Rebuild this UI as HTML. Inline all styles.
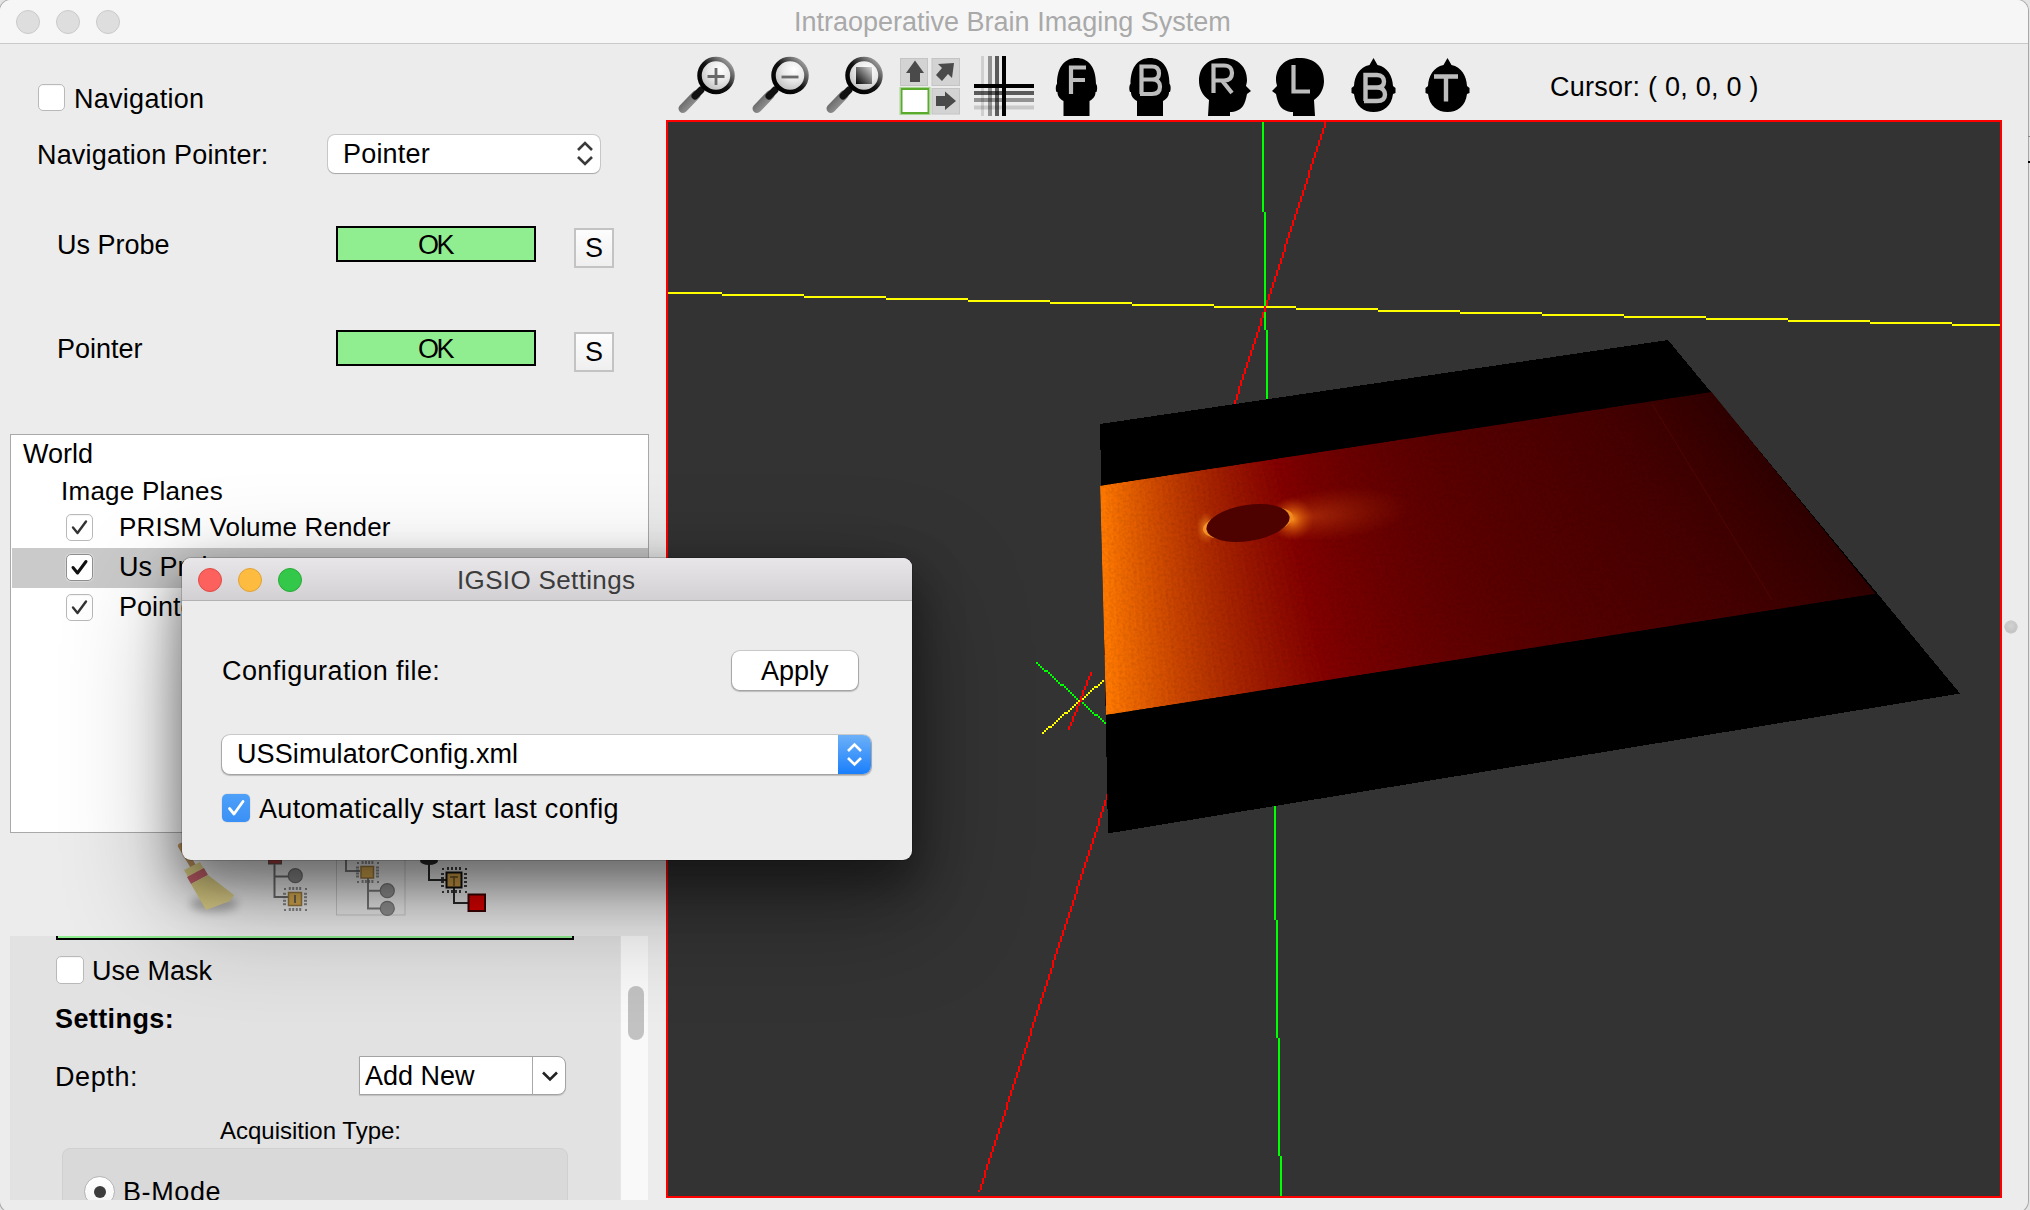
<!DOCTYPE html>
<html><head><meta charset="utf-8">
<style>
*{box-sizing:border-box;margin:0;padding:0}
html,body{width:2030px;height:1210px;overflow:hidden;background:#e4e4e4}
body{font-family:"Liberation Sans",sans-serif;font-size:27px;line-height:27px;color:#000;position:relative}
.a{position:absolute}
.t{position:absolute;white-space:nowrap;font-size:27px;line-height:27px}
#win{position:absolute;left:0;top:0;width:2028px;height:1212px;background:#ececec;border-radius:11px;overflow:hidden;box-shadow:0 0 0 1px #a8a8a8}
#titlebar{position:absolute;left:0;top:0;width:2028px;height:44px;background:#f6f6f6;border-bottom:1px solid #c9c9c9}
.tl{position:absolute;top:10px;width:24px;height:24px;border-radius:50%;background:#dedede;border:1px solid #cacaca}
.cb{position:absolute;width:27px;height:27px;border-radius:5px;background:#fff;border:1px solid #b9b9b9;box-shadow:inset 0 1px 1px rgba(0,0,0,0.04)}
.okb{position:absolute;width:200px;height:36px;background:#90ee90;border:2px solid #000}
.sb{position:absolute;width:40px;height:40px;border:2px solid #c3c3c3;background:linear-gradient(#fdfdfd,#efefef)}
</style></head>
<body>
<div id="win">
  <div id="titlebar">
    <div class="tl" style="left:16px"></div>
    <div class="tl" style="left:56px"></div>
    <div class="tl" style="left:96px"></div>
    <div class="t" style="left:794px;top:9px;color:#a9a9a9">Intraoperative Brain Imaging System</div>
  </div>

  <svg class="a" style="left:0;top:0" width="1500" height="120" viewBox="0 0 1500 120">
    <defs>
      <linearGradient id="hdl" x1="0" y1="0" x2="1" y2="1"><stop offset="0" stop-color="#5a5a5a"/><stop offset="1" stop-color="#a0a0a0"/></linearGradient>
      <radialGradient id="lens" cx="0.62" cy="0.32" r="0.7"><stop offset="0" stop-color="#ffffff"/><stop offset="0.5" stop-color="#e8e8e8"/><stop offset="1" stop-color="#bcbcbc"/></radialGradient>
      <linearGradient id="ring" x1="0.1" y1="0.9" x2="0.9" y2="0.1"><stop offset="0" stop-color="#000"/><stop offset="0.5" stop-color="#111"/><stop offset="1" stop-color="#9a9a9a"/></linearGradient>
      <linearGradient id="sq" x1="0" y1="1" x2="1" y2="0"><stop offset="0" stop-color="#000"/><stop offset="1" stop-color="#d8d8d8"/></linearGradient>
    </defs>
    <g>
      <line x1="696" y1="95" x2="683" y2="108.5" stroke="url(#hdl)" stroke-width="9" stroke-linecap="round"/>
      <line x1="701" y1="90" x2="695" y2="96" stroke="#111" stroke-width="7" stroke-linecap="round"/>
      <circle cx="716" cy="75.5" r="16.5" fill="url(#lens)" stroke="url(#ring)" stroke-width="4.5"/>
      <path d="M707.5 76.5 H724.5 M716 68 V85" stroke="#6a6a6a" stroke-width="2.8"/>
    </g>
    <g>
      <line x1="770" y1="95" x2="757" y2="108.5" stroke="url(#hdl)" stroke-width="9" stroke-linecap="round"/>
      <line x1="775" y1="90" x2="769" y2="96" stroke="#111" stroke-width="7" stroke-linecap="round"/>
      <circle cx="790" cy="75.5" r="16.5" fill="url(#lens)" stroke="url(#ring)" stroke-width="4.5"/>
      <path d="M781.5 77 H798.5" stroke="#6a6a6a" stroke-width="2.8"/>
    </g>
    <g>
      <line x1="844" y1="95" x2="831" y2="108.5" stroke="url(#hdl)" stroke-width="9" stroke-linecap="round"/>
      <line x1="849" y1="90" x2="843" y2="96" stroke="#111" stroke-width="7" stroke-linecap="round"/>
      <circle cx="864" cy="75.5" r="16.5" fill="url(#lens)" stroke="url(#ring)" stroke-width="4.5"/>
      <rect x="856" y="67" width="16" height="17" fill="url(#sq)"/>
    </g>
    <g>
      <rect x="900.5" y="58.5" width="27" height="27" fill="#d3d3d3" stroke="#c4c4c4"/>
      <rect x="932" y="58.5" width="27.5" height="27" fill="#d3d3d3" stroke="#c4c4c4"/>
      <rect x="932" y="88.5" width="27.5" height="25.5" fill="#d3d3d3" stroke="#c4c4c4"/>
      <rect x="901.5" y="89" width="27" height="24" fill="#fff" stroke="#5aaa2e" stroke-width="2"/>
      <rect x="900" y="87.5" width="30" height="27" fill="none" stroke="#a8d494" stroke-width="1"/>
      <path d="M915 60.5 L924 73 L920 73 L920 82 L910 82 L910 73 L906 73 Z" fill="#4a4a4a"/>
      <path d="M954 63 L952 78 L948 74 L942 81 L936 75 L942 68 L938 64 Z" fill="#4a4a4a"/>
      <path d="M956 101 L945 91.5 L945 96 L936 96 L936 106 L945 106 L945 110 Z" fill="#4a4a4a"/>
    </g>
    <g>
      <rect x="981" y="56" width="3" height="60" fill="#000" opacity="0.12"/>
      <rect x="988" y="56" width="4" height="60" fill="#000" opacity="0.38"/>
      <rect x="995" y="56" width="4" height="60" fill="#000" opacity="0.62"/>
      <rect x="974" y="91" width="60" height="4" fill="#000" opacity="0.62"/>
      <rect x="974" y="98" width="60" height="4" fill="#000" opacity="0.38"/>
      <rect x="974" y="105.5" width="60" height="4" fill="#000" opacity="0.15"/>
      <rect x="1002" y="56" width="4" height="60" fill="#000"/>
      <rect x="974" y="84" width="60" height="4" fill="#000"/>
    </g>
    <g>
      <path d="M1063.5 116 L1063.5 101 C1058.5 98 1057.5 95 1057.5 92 L1056.5 92 C1055.5 90 1055.5 85 1057.0 84 C1057.0 66 1065.5 58 1076.5 58 C1087.5 58 1096.0 66 1096.0 84 C1097.5 85 1097.5 90 1096.5 92 L1095.5 92 C1095.5 95 1094.5 98 1089.5 101 L1089.5 116 Z" fill="#000"/>
      <path d="M1071 94 V67.5 H1086 M1071 80 H1085" fill="none" stroke="#bdbdbd" stroke-width="4.2"/>
    </g>
    <g>
      <path d="M1137 116 L1137 101 C1132 98 1131 95 1131 92 L1130 92 C1129 90 1129 85 1130.5 84 C1130.5 66 1139 58 1150 58 C1161 58 1169.5 66 1169.5 84 C1171 85 1171 90 1170 92 L1169 92 C1169 95 1168 98 1163 101 L1163 116 Z" fill="#000"/>
      <path d="M1141.5 94 V66.5 H1152 C1158 66.5 1159 70 1159 73.5 C1159 77 1157 79.5 1152 79.5 H1141.5 M1152 79.5 C1158 79.5 1160 83 1160 86.5 C1160 90.5 1158 94 1152 94 H1140" fill="none" stroke="#bdbdbd" stroke-width="4.2"/>
    </g>
    <g>
      <path d="M1208 116 L1209 100 C1202 95 1199 88 1199 81 C1199 66 1209 58 1224 58 C1238 58 1247 67 1247 80 C1247 83 1246 85 1246 86 L1251 91 L1247 94 C1246 99 1245 103 1243 106 C1240 110 1235 112 1230 112 L1230 116 Z" fill="#000"/>
      <path d="M1213.5 93 V65.5 H1224 C1230 65.5 1232 69.5 1232 73 C1232 77 1230 80.5 1224 80.5 H1213.5 M1222 80.5 L1232 93" fill="none" stroke="#bdbdbd" stroke-width="4.2"/>
    </g>
    <g>
      <path d="M1315 116 L1314 100 C1321 95 1324 88 1324 81 C1324 66 1314 58 1299 58 C1285 58 1276 67 1276 80 C1276 83 1277 85 1277 86 L1272 91 L1276 94 C1277 99 1278 103 1280 106 C1283 110 1288 112 1293 112 L1293 116 Z" fill="#000"/>
      <path d="M1293.5 65 V91.5 H1310" fill="none" stroke="#bdbdbd" stroke-width="4.2"/>
    </g>
    <g>
      <path d="M1373.5 58 L1377.5 65 C1387.5 67 1392.5 76 1393.0 86 L1395.5 88 L1395.5 93 L1393.0 94 C1391.5 106 1383.5 112 1373.5 112 C1363.5 112 1355.5 106 1354.0 94 L1351.5 93 L1351.5 88 L1354.0 86 C1354.5 76 1359.5 67 1369.5 65 Z" fill="#000"/>
      <path d="M1365.5 101 V75 H1377 C1382 75 1384 78 1384 81.5 C1384 85 1382 87.5 1377 87.5 H1365.5 M1377 87.5 C1383 87.5 1385 91 1385 94.5 C1385 98.5 1383 101 1377 101 H1364" fill="none" stroke="#bdbdbd" stroke-width="4.4"/>
    </g>
    <g>
      <path d="M1447.5 58 L1451.5 65 C1461.5 67 1466.5 76 1467.0 86 L1469.5 88 L1469.5 93 L1467.0 94 C1465.5 106 1457.5 112 1447.5 112 C1437.5 112 1429.5 106 1428.0 94 L1425.5 93 L1425.5 88 L1428.0 86 C1428.5 76 1433.5 67 1443.5 65 Z" fill="#000"/>
      <path d="M1434 76.5 H1458 M1446 76.5 V101.5" fill="none" stroke="#bdbdbd" stroke-width="4.4"/>
    </g>
  </svg>
  <div class="t" style="left:1550px;top:74px;letter-spacing:0.25px">Cursor: ( 0, 0, 0 )</div>
  <!-- left panel -->
  <div class="cb" style="left:38px;top:84px"></div>
  <div class="t" style="left:74px;top:86px;letter-spacing:0.27px">Navigation</div>
  <div class="t" style="left:37px;top:142px;letter-spacing:0.18px">Navigation Pointer:</div>
  <div class="a" style="left:328px;top:135px;width:272px;height:38px;background:#fff;border-radius:7px;box-shadow:0 0 0 1px rgba(0,0,0,0.14),0 1px 1px rgba(0,0,0,0.18)"></div>
  <div class="t" style="left:343px;top:141px;letter-spacing:0.2px">Pointer</div>
  <svg class="a" style="left:574px;top:140px" width="22" height="28" viewBox="0 0 22 28"><path d="M4 10 L11 3 L18 10 M4 17 L11 24 L18 17" fill="none" stroke="#3a3a3a" stroke-width="2.6"/></svg>

  <div class="t" style="left:57px;top:232px">Us Probe</div>
  <div class="okb" style="left:336px;top:226px"></div>
  <div class="t" style="left:418px;top:232px;letter-spacing:-2.5px">OK</div>
  <div class="sb" style="left:574px;top:228px"></div>
  <div class="t" style="left:585px;top:235px">S</div>

  <div class="t" style="left:57px;top:336px">Pointer</div>
  <div class="okb" style="left:336px;top:330px"></div>
  <div class="t" style="left:418px;top:336px;letter-spacing:-2.5px">OK</div>
  <div class="sb" style="left:574px;top:332px"></div>
  <div class="t" style="left:585px;top:339px">S</div>

  <!-- tree -->
  <div id="tree" class="a" style="left:10px;top:434px;width:639px;height:399px;background:#fff;border:1px solid #a9a9a9;overflow:hidden">
    <div class="a" style="left:1px;top:113px;width:636px;height:40px;background:#cacaca"></div>
    <div class="t" style="left:12px;top:6px">World</div>
    <div class="t" style="left:50px;top:43px;font-size:26px;letter-spacing:0.25px">Image Planes</div>
    <div class="cb" style="left:55px;top:79px"><svg width="25" height="25" viewBox="0 0 25 25"><path d="M6 12.5 L10.5 18 L19 6.5" fill="none" stroke="#333" stroke-width="2.4" stroke-linecap="round" stroke-linejoin="round"/></svg></div>
    <div class="t" style="left:108px;top:79px;font-size:26px;letter-spacing:0.15px">PRISM Volume Render</div>
    <div class="cb" style="left:55px;top:119px;border:1px solid #8f8f8f;box-shadow:0 0 0 1px #d8d8d8"><svg width="25" height="25" viewBox="0 0 25 25"><path d="M6 12.5 L10.5 18 L19 6.5" fill="none" stroke="#111" stroke-width="3" stroke-linecap="round" stroke-linejoin="round"/></svg></div>
    <div class="t" style="left:108px;top:119px">Us Probe</div>
    <div class="cb" style="left:55px;top:159px"><svg width="25" height="25" viewBox="0 0 25 25"><path d="M6 12.5 L10.5 18 L19 6.5" fill="none" stroke="#333" stroke-width="2.4" stroke-linecap="round" stroke-linejoin="round"/></svg></div>
    <div class="t" style="left:108px;top:159px">Pointer</div>
  </div>

  <!-- bottom icons -->
  <svg class="a" style="left:0;top:830px" width="660" height="110" viewBox="0 830 660 110">
    <defs>
      <filter id="bl" x="-50%" y="-50%" width="200%" height="200%"><feGaussianBlur stdDeviation="4"/></filter>
      <linearGradient id="brist" x1="0" y1="0" x2="1" y2="1"><stop offset="0" stop-color="#d4c67a"/><stop offset="1" stop-color="#e2d490"/></linearGradient>
    </defs>
    <ellipse cx="214" cy="904" rx="24" ry="8" fill="#000" opacity="0.25" filter="url(#bl)"/>
    <path d="M181 846 L193 866" stroke="#b8905c" stroke-width="6" stroke-linecap="round"/>
    <path d="M184 870 L200 862 L204 869 L188 877 Z" fill="#dccf86"/>
    <path d="M187 877 L204 868 L208 875 L191 884 Z" fill="#c4606a"/>
    <path d="M191 884 L208 875 L234 895 L230 901 L206 910 Z" fill="url(#brist)"/>
    <g>
      <rect x="268.5" y="859" width="13" height="5" fill="#a84040" stroke="#555" stroke-width="1"/>
      <path d="M274.5 864 V897 H288 M274.5 876.5 H288" fill="none" stroke="#6e6e6e" stroke-width="2"/>
      <circle cx="295.3" cy="875.7" r="7" fill="#8c8c8c" stroke="#707070" stroke-width="1.2"/>
      <rect x="288.5" y="892.5" width="13" height="13" fill="#d8ac50" stroke="#9a7a40" stroke-width="1.5"/>
      <path d="M295 895 V903" stroke="#555" stroke-width="1.6"/>
      <g opacity="0.75"><rect x="288.8" y="887.0" width="2" height="3" fill="#666"/><rect x="288.8" y="908.0" width="2" height="3" fill="#666"/><rect x="283.0" y="892.8" width="3" height="2" fill="#666"/><rect x="304.0" y="892.8" width="3" height="2" fill="#666"/><rect x="292.2" y="887.0" width="2" height="3" fill="#666"/><rect x="292.2" y="908.0" width="2" height="3" fill="#666"/><rect x="283.0" y="896.2" width="3" height="2" fill="#666"/><rect x="304.0" y="896.2" width="3" height="2" fill="#666"/><rect x="295.8" y="887.0" width="2" height="3" fill="#666"/><rect x="295.8" y="908.0" width="2" height="3" fill="#666"/><rect x="283.0" y="899.8" width="3" height="2" fill="#666"/><rect x="304.0" y="899.8" width="3" height="2" fill="#666"/><rect x="299.2" y="887.0" width="2" height="3" fill="#666"/><rect x="299.2" y="908.0" width="2" height="3" fill="#666"/><rect x="283.0" y="903.2" width="3" height="2" fill="#666"/><rect x="304.0" y="903.2" width="3" height="2" fill="#666"/><rect x="284.0" y="888.0" width="2" height="2" fill="#666"/><rect x="305.0" y="888.0" width="2" height="2" fill="#666"/><rect x="284.0" y="909.0" width="2" height="2" fill="#666"/><rect x="305.0" y="909.0" width="2" height="2" fill="#666"/></g>
    </g>
    <rect x="336.5" y="856.5" width="68.5" height="58.5" fill="none" stroke="#b8b8b8" stroke-width="1" opacity="0.7"/>
    <g>
      <path d="M346 858 V871 H360 M368 878 V908.5 H380 M368 890.7 H380" fill="none" stroke="#7a7a7a" stroke-width="2"/>
      <rect x="361" y="866.5" width="12.5" height="11.5" fill="#d8ac50" stroke="#9a7a40" stroke-width="1.5"/>
      <g opacity="0.7"><rect x="361.6" y="861.0" width="2" height="3" fill="#666"/><rect x="361.6" y="880.0" width="2" height="3" fill="#666"/><rect x="356.0" y="866.5" width="3" height="2" fill="#666"/><rect x="376.0" y="866.5" width="3" height="2" fill="#666"/><rect x="364.9" y="861.0" width="2" height="3" fill="#666"/><rect x="364.9" y="880.0" width="2" height="3" fill="#666"/><rect x="356.0" y="869.5" width="3" height="2" fill="#666"/><rect x="376.0" y="869.5" width="3" height="2" fill="#666"/><rect x="368.1" y="861.0" width="2" height="3" fill="#666"/><rect x="368.1" y="880.0" width="2" height="3" fill="#666"/><rect x="356.0" y="872.5" width="3" height="2" fill="#666"/><rect x="376.0" y="872.5" width="3" height="2" fill="#666"/><rect x="371.4" y="861.0" width="2" height="3" fill="#666"/><rect x="371.4" y="880.0" width="2" height="3" fill="#666"/><rect x="356.0" y="875.5" width="3" height="2" fill="#666"/><rect x="376.0" y="875.5" width="3" height="2" fill="#666"/><rect x="357.0" y="862.0" width="2" height="2" fill="#666"/><rect x="377.0" y="862.0" width="2" height="2" fill="#666"/><rect x="357.0" y="881.0" width="2" height="2" fill="#666"/><rect x="377.0" y="881.0" width="2" height="2" fill="#666"/></g>
      <circle cx="387.3" cy="890.7" r="7" fill="#929292" stroke="#747474" stroke-width="1.2"/>
      <circle cx="387.3" cy="908.4" r="7" fill="#929292" stroke="#747474" stroke-width="1.2"/>
    </g>
    <g>
      <ellipse cx="429" cy="861" rx="9" ry="4" fill="#2a2a2a"/>
      <path d="M429 864 V880 H446 M454 888 V903 H468" fill="none" stroke="#2a2a2a" stroke-width="2"/>
      <rect x="446.5" y="872.5" width="15" height="15" fill="#d0a048" stroke="#111" stroke-width="2"/>
      <path d="M454 876 V886 M450 877 H458" stroke="#6a5020" stroke-width="1.4"/>
      <g opacity="0.85"><rect x="447.0" y="867.0" width="2" height="3" fill="#222"/><rect x="447.0" y="890.0" width="2" height="3" fill="#222"/><rect x="441.0" y="873.0" width="3" height="2" fill="#222"/><rect x="464.0" y="873.0" width="3" height="2" fill="#222"/><rect x="451.0" y="867.0" width="2" height="3" fill="#222"/><rect x="451.0" y="890.0" width="2" height="3" fill="#222"/><rect x="441.0" y="877.0" width="3" height="2" fill="#222"/><rect x="464.0" y="877.0" width="3" height="2" fill="#222"/><rect x="455.0" y="867.0" width="2" height="3" fill="#222"/><rect x="455.0" y="890.0" width="2" height="3" fill="#222"/><rect x="441.0" y="881.0" width="3" height="2" fill="#222"/><rect x="464.0" y="881.0" width="3" height="2" fill="#222"/><rect x="459.0" y="867.0" width="2" height="3" fill="#222"/><rect x="459.0" y="890.0" width="2" height="3" fill="#222"/><rect x="441.0" y="885.0" width="3" height="2" fill="#222"/><rect x="464.0" y="885.0" width="3" height="2" fill="#222"/><rect x="442.0" y="868.0" width="2" height="2" fill="#222"/><rect x="465.0" y="868.0" width="2" height="2" fill="#222"/><rect x="442.0" y="891.0" width="2" height="2" fill="#222"/><rect x="465.0" y="891.0" width="2" height="2" fill="#222"/></g>
      <rect x="468.5" y="894.5" width="16.5" height="16.5" fill="#dd0000" stroke="#3a0000" stroke-width="2"/>
    </g>
  </svg>

  <!-- scroll area -->
  <div id="scroll" class="a" style="left:10px;top:936px;width:638px;height:264px;background:#e2e2e2;overflow:hidden">
    <div class="a" style="left:46px;top:-34px;width:518px;height:38px;background:#90ee90;border:2px solid #000"></div>
    <div class="cb" style="left:46px;top:20px;width:28px;height:28px"></div>
    <div class="t" style="left:82px;top:22px">Use Mask</div>
    <div class="t" style="left:45px;top:70px;font-weight:bold;letter-spacing:0.4px">Settings:</div>
    <div class="t" style="left:45px;top:128px;letter-spacing:0.6px">Depth:</div>
    <div class="a" style="left:349px;top:120px;width:207px;height:39px;background:#fff;border:1px solid #a3a3a3;border-radius:0 8px 8px 0;box-shadow:0 1px 1px rgba(0,0,0,0.15)">
      <div class="a" style="left:172px;top:-1px;width:1px;height:39px;background:#a8a8a8"></div>
      <svg class="a" style="left:181px;top:13px" width="18" height="12" viewBox="0 0 18 12"><path d="M2 2.5 L9 9.5 L16 2.5" fill="none" stroke="#222" stroke-width="2.6"/></svg>
    </div>
    <div class="t" style="left:355px;top:127px">Add New</div>
    <div class="t" style="left:210px;top:183px;font-size:24px;line-height:24px">Acquisition Type:</div>
    <div class="a" style="left:52px;top:212px;width:506px;height:80px;background:#d9d9d9;border:1px solid #d0d0d0;border-radius:8px"></div>
    <div class="a" style="left:74px;top:240px;width:31px;height:31px;border-radius:50%;background:linear-gradient(#fff,#f4f4f4);border:1px solid #b5b5b5"></div>
    <div class="a" style="left:84px;top:250px;width:12px;height:12px;border-radius:50%;background:#3c3c3c"></div>
    <div class="t" style="left:113px;top:243px;letter-spacing:0.6px">B-Mode</div>
    <div class="a" style="left:610px;top:0;width:28px;height:264px;background:#f9f9f9;border-left:1px solid #e6e6e6"></div>
    <div class="a" style="left:618px;top:50px;width:16px;height:54px;background:#c2c2c2;border-radius:8px"></div>
  </div>
  <!-- 3D view -->
  <div id="view" class="a" style="left:666px;top:120px;width:1336px;height:1078px;background:#333;border:2px solid #f00;overflow:hidden">
    <svg class="a" style="left:0;top:0" width="1332" height="1074" viewBox="668 122 1332 1074">
      <defs>
        <filter id="noise" x="0" y="0" width="100%" height="100%"><feTurbulence type="fractalNoise" baseFrequency="0.35" numOctaves="2" seed="3"/><feColorMatrix type="matrix" values="0 0 0 0 0  0 0 0 0 0  0 0 0 0 0  0 0 0 -1.6 1.0"/></filter>
        <clipPath id="bandclip"><polygon points="1100,485.8 1711.7,391.9 1875.7,593.7 1106,715"/></clipPath>
        <linearGradient id="bandshade" gradientUnits="userSpaceOnUse" x1="0" y1="440" x2="0" y2="660">
          <stop offset="0" stop-color="#000" stop-opacity="0.08"/>
          <stop offset="1" stop-color="#000" stop-opacity="0"/>
        </linearGradient>
        <linearGradient id="band" gradientUnits="userSpaceOnUse" x1="1100" y1="600" x2="1880" y2="580">
          <stop offset="0.000" stop-color="#f58000"/>
          <stop offset="0.026" stop-color="#e46c00"/>
          <stop offset="0.064" stop-color="#cc5000"/>
          <stop offset="0.128" stop-color="#b83c00"/>
          <stop offset="0.192" stop-color="#a82e00"/>
          <stop offset="0.256" stop-color="#962000"/>
          <stop offset="0.321" stop-color="#861400"/>
          <stop offset="0.385" stop-color="#760b00"/>
          <stop offset="0.513" stop-color="#640400"/>
          <stop offset="0.641" stop-color="#560000"/>
          <stop offset="1.000" stop-color="#480000"/>
        </linearGradient>
        <linearGradient id="holeg" gradientUnits="userSpaceOnUse" x1="1200" y1="520" x2="1292" y2="520">
          <stop offset="0" stop-color="#ee8a20"/>
          <stop offset="0.12" stop-color="#7a1800"/>
          <stop offset="0.5" stop-color="#560400"/>
          <stop offset="0.88" stop-color="#6a1000"/>
          <stop offset="1" stop-color="#f08a20"/>
        </linearGradient>
        <radialGradient id="glow1"><stop offset="0" stop-color="#ff9a20" stop-opacity="0.95"/><stop offset="0.35" stop-color="#f07810" stop-opacity="0.6"/><stop offset="1" stop-color="#c04000" stop-opacity="0"/></radialGradient>
        <radialGradient id="glow2" fx="0.3"><stop offset="0" stop-color="#d05010" stop-opacity="0.5"/><stop offset="1" stop-color="#b03000" stop-opacity="0"/></radialGradient>
        <radialGradient id="glow3"><stop offset="0" stop-color="#ffa030" stop-opacity="0.8"/><stop offset="1" stop-color="#e07010" stop-opacity="0"/></radialGradient>
      </defs>
      <g id="lines" shape-rendering="crispEdges"><rect x="1262" y="122" width="2" height="90" fill="#00ff00"/><rect x="1264" y="212" width="2" height="118" fill="#00ff00"/><rect x="1266" y="330" width="2" height="118" fill="#00ff00"/><rect x="1268" y="448" width="2" height="118" fill="#00ff00"/><rect x="1270" y="566" width="2" height="118" fill="#00ff00"/><rect x="1272" y="684" width="2" height="118" fill="#00ff00"/><rect x="1274" y="802" width="2" height="118" fill="#00ff00"/><rect x="1276" y="920" width="2" height="118" fill="#00ff00"/><rect x="1278" y="1038" width="2" height="118" fill="#00ff00"/><rect x="1280" y="1156" width="2" height="40" fill="#00ff00"/><rect x="668" y="292" width="54" height="2" fill="#ffff00"/><rect x="722" y="294" width="82" height="2" fill="#ffff00"/><rect x="804" y="296" width="82" height="2" fill="#ffff00"/><rect x="886" y="298" width="82" height="2" fill="#ffff00"/><rect x="968" y="300" width="82" height="2" fill="#ffff00"/><rect x="1050" y="302" width="82" height="2" fill="#ffff00"/><rect x="1132" y="304" width="82" height="2" fill="#ffff00"/><rect x="1214" y="306" width="82" height="2" fill="#ffff00"/><rect x="1296" y="308" width="82" height="2" fill="#ffff00"/><rect x="1378" y="310" width="82" height="2" fill="#ffff00"/><rect x="1460" y="312" width="82" height="2" fill="#ffff00"/><rect x="1542" y="314" width="82" height="2" fill="#ffff00"/><rect x="1624" y="316" width="82" height="2" fill="#ffff00"/><rect x="1706" y="318" width="82" height="2" fill="#ffff00"/><rect x="1788" y="320" width="82" height="2" fill="#ffff00"/><rect x="1870" y="322" width="82" height="2" fill="#ffff00"/><rect x="1952" y="324" width="48" height="2" fill="#ffff00"/><rect x="1324" y="122" width="2" height="6" fill="#ff0000"/><rect x="1322" y="128" width="2" height="6" fill="#ff0000"/><rect x="1320" y="134" width="2" height="6" fill="#ff0000"/><rect x="1318" y="140" width="2" height="6" fill="#ff0000"/><rect x="1316" y="146" width="2" height="6" fill="#ff0000"/><rect x="1314" y="152" width="2" height="6" fill="#ff0000"/><rect x="1312" y="158" width="2" height="6" fill="#ff0000"/><rect x="1310" y="164" width="2" height="6" fill="#ff0000"/><rect x="1308" y="170" width="2" height="8" fill="#ff0000"/><rect x="1306" y="178" width="2" height="6" fill="#ff0000"/><rect x="1304" y="184" width="2" height="6" fill="#ff0000"/><rect x="1302" y="190" width="2" height="6" fill="#ff0000"/><rect x="1300" y="196" width="2" height="6" fill="#ff0000"/><rect x="1298" y="202" width="2" height="6" fill="#ff0000"/><rect x="1296" y="208" width="2" height="6" fill="#ff0000"/><rect x="1294" y="214" width="2" height="6" fill="#ff0000"/><rect x="1292" y="220" width="2" height="6" fill="#ff0000"/><rect x="1290" y="226" width="2" height="6" fill="#ff0000"/><rect x="1288" y="232" width="2" height="6" fill="#ff0000"/><rect x="1286" y="238" width="2" height="6" fill="#ff0000"/><rect x="1284" y="244" width="2" height="8" fill="#ff0000"/><rect x="1282" y="252" width="2" height="6" fill="#ff0000"/><rect x="1280" y="258" width="2" height="6" fill="#ff0000"/><rect x="1278" y="264" width="2" height="6" fill="#ff0000"/><rect x="1276" y="270" width="2" height="6" fill="#ff0000"/><rect x="1274" y="276" width="2" height="6" fill="#ff0000"/><rect x="1272" y="282" width="2" height="6" fill="#ff0000"/><rect x="1270" y="288" width="2" height="6" fill="#ff0000"/><rect x="1268" y="294" width="2" height="6" fill="#ff0000"/><rect x="1266" y="300" width="2" height="6" fill="#ff0000"/><rect x="1264" y="306" width="2" height="6" fill="#ff0000"/><rect x="1262" y="312" width="2" height="6" fill="#ff0000"/><rect x="1260" y="318" width="2" height="8" fill="#ff0000"/><rect x="1258" y="326" width="2" height="6" fill="#ff0000"/><rect x="1256" y="332" width="2" height="6" fill="#ff0000"/><rect x="1254" y="338" width="2" height="6" fill="#ff0000"/><rect x="1252" y="344" width="2" height="6" fill="#ff0000"/><rect x="1250" y="350" width="2" height="6" fill="#ff0000"/><rect x="1248" y="356" width="2" height="6" fill="#ff0000"/><rect x="1246" y="362" width="2" height="6" fill="#ff0000"/><rect x="1244" y="368" width="2" height="6" fill="#ff0000"/><rect x="1242" y="374" width="2" height="6" fill="#ff0000"/><rect x="1240" y="380" width="2" height="6" fill="#ff0000"/><rect x="1238" y="386" width="2" height="8" fill="#ff0000"/><rect x="1236" y="394" width="2" height="6" fill="#ff0000"/><rect x="1234" y="400" width="2" height="6" fill="#ff0000"/><rect x="1232" y="406" width="2" height="6" fill="#ff0000"/><rect x="1230" y="412" width="2" height="6" fill="#ff0000"/><rect x="1228" y="418" width="2" height="6" fill="#ff0000"/><rect x="1226" y="424" width="2" height="6" fill="#ff0000"/><rect x="1224" y="430" width="2" height="6" fill="#ff0000"/><rect x="1222" y="436" width="2" height="6" fill="#ff0000"/><rect x="1220" y="442" width="2" height="6" fill="#ff0000"/><rect x="1218" y="448" width="2" height="6" fill="#ff0000"/><rect x="1216" y="454" width="2" height="6" fill="#ff0000"/><rect x="1214" y="460" width="2" height="8" fill="#ff0000"/><rect x="1212" y="468" width="2" height="6" fill="#ff0000"/><rect x="1210" y="474" width="2" height="6" fill="#ff0000"/><rect x="1208" y="480" width="2" height="6" fill="#ff0000"/><rect x="1206" y="486" width="2" height="6" fill="#ff0000"/><rect x="1204" y="492" width="2" height="6" fill="#ff0000"/><rect x="1202" y="498" width="2" height="6" fill="#ff0000"/><rect x="1200" y="504" width="2" height="6" fill="#ff0000"/><rect x="1198" y="510" width="2" height="6" fill="#ff0000"/><rect x="1196" y="516" width="2" height="6" fill="#ff0000"/><rect x="1194" y="522" width="2" height="6" fill="#ff0000"/><rect x="1192" y="528" width="2" height="8" fill="#ff0000"/><rect x="1190" y="536" width="2" height="6" fill="#ff0000"/><rect x="1188" y="542" width="2" height="6" fill="#ff0000"/><rect x="1186" y="548" width="2" height="6" fill="#ff0000"/><rect x="1184" y="554" width="2" height="6" fill="#ff0000"/><rect x="1182" y="560" width="2" height="6" fill="#ff0000"/><rect x="1180" y="566" width="2" height="6" fill="#ff0000"/><rect x="1178" y="572" width="2" height="6" fill="#ff0000"/><rect x="1176" y="578" width="2" height="6" fill="#ff0000"/><rect x="1174" y="584" width="2" height="6" fill="#ff0000"/><rect x="1172" y="590" width="2" height="6" fill="#ff0000"/><rect x="1170" y="596" width="2" height="6" fill="#ff0000"/><rect x="1168" y="602" width="2" height="8" fill="#ff0000"/><rect x="1166" y="610" width="2" height="6" fill="#ff0000"/><rect x="1164" y="616" width="2" height="6" fill="#ff0000"/><rect x="1162" y="622" width="2" height="6" fill="#ff0000"/><rect x="1160" y="628" width="2" height="6" fill="#ff0000"/><rect x="1158" y="634" width="2" height="6" fill="#ff0000"/><rect x="1156" y="640" width="2" height="6" fill="#ff0000"/><rect x="1154" y="646" width="2" height="6" fill="#ff0000"/><rect x="1152" y="652" width="2" height="6" fill="#ff0000"/><rect x="1150" y="658" width="2" height="6" fill="#ff0000"/><rect x="1148" y="664" width="2" height="6" fill="#ff0000"/><rect x="1146" y="670" width="2" height="8" fill="#ff0000"/><rect x="1144" y="678" width="2" height="6" fill="#ff0000"/><rect x="1142" y="684" width="2" height="6" fill="#ff0000"/><rect x="1140" y="690" width="2" height="6" fill="#ff0000"/><rect x="1138" y="696" width="2" height="6" fill="#ff0000"/><rect x="1136" y="702" width="2" height="6" fill="#ff0000"/><rect x="1134" y="708" width="2" height="6" fill="#ff0000"/><rect x="1132" y="714" width="2" height="6" fill="#ff0000"/><rect x="1130" y="720" width="2" height="6" fill="#ff0000"/><rect x="1128" y="726" width="2" height="6" fill="#ff0000"/><rect x="1126" y="732" width="2" height="6" fill="#ff0000"/><rect x="1124" y="738" width="2" height="6" fill="#ff0000"/><rect x="1122" y="744" width="2" height="8" fill="#ff0000"/><rect x="1120" y="752" width="2" height="6" fill="#ff0000"/><rect x="1118" y="758" width="2" height="6" fill="#ff0000"/><rect x="1116" y="764" width="2" height="6" fill="#ff0000"/><rect x="1114" y="770" width="2" height="6" fill="#ff0000"/><rect x="1112" y="776" width="2" height="6" fill="#ff0000"/><rect x="1110" y="782" width="2" height="6" fill="#ff0000"/><rect x="1108" y="788" width="2" height="6" fill="#ff0000"/><rect x="1106" y="794" width="2" height="6" fill="#ff0000"/><rect x="1104" y="800" width="2" height="6" fill="#ff0000"/><rect x="1102" y="806" width="2" height="6" fill="#ff0000"/><rect x="1100" y="812" width="2" height="6" fill="#ff0000"/><rect x="1098" y="818" width="2" height="8" fill="#ff0000"/><rect x="1096" y="826" width="2" height="6" fill="#ff0000"/><rect x="1094" y="832" width="2" height="6" fill="#ff0000"/><rect x="1092" y="838" width="2" height="6" fill="#ff0000"/><rect x="1090" y="844" width="2" height="6" fill="#ff0000"/><rect x="1088" y="850" width="2" height="6" fill="#ff0000"/><rect x="1086" y="856" width="2" height="6" fill="#ff0000"/><rect x="1084" y="862" width="2" height="6" fill="#ff0000"/><rect x="1082" y="868" width="2" height="6" fill="#ff0000"/><rect x="1080" y="874" width="2" height="6" fill="#ff0000"/><rect x="1078" y="880" width="2" height="6" fill="#ff0000"/><rect x="1076" y="886" width="2" height="8" fill="#ff0000"/><rect x="1074" y="894" width="2" height="6" fill="#ff0000"/><rect x="1072" y="900" width="2" height="6" fill="#ff0000"/><rect x="1070" y="906" width="2" height="6" fill="#ff0000"/><rect x="1068" y="912" width="2" height="6" fill="#ff0000"/><rect x="1066" y="918" width="2" height="6" fill="#ff0000"/><rect x="1064" y="924" width="2" height="6" fill="#ff0000"/><rect x="1062" y="930" width="2" height="6" fill="#ff0000"/><rect x="1060" y="936" width="2" height="6" fill="#ff0000"/><rect x="1058" y="942" width="2" height="6" fill="#ff0000"/><rect x="1056" y="948" width="2" height="6" fill="#ff0000"/><rect x="1054" y="954" width="2" height="6" fill="#ff0000"/><rect x="1052" y="960" width="2" height="8" fill="#ff0000"/><rect x="1050" y="968" width="2" height="6" fill="#ff0000"/><rect x="1048" y="974" width="2" height="6" fill="#ff0000"/><rect x="1046" y="980" width="2" height="6" fill="#ff0000"/><rect x="1044" y="986" width="2" height="6" fill="#ff0000"/><rect x="1042" y="992" width="2" height="6" fill="#ff0000"/><rect x="1040" y="998" width="2" height="6" fill="#ff0000"/><rect x="1038" y="1004" width="2" height="6" fill="#ff0000"/><rect x="1036" y="1010" width="2" height="6" fill="#ff0000"/><rect x="1034" y="1016" width="2" height="6" fill="#ff0000"/><rect x="1032" y="1022" width="2" height="6" fill="#ff0000"/><rect x="1030" y="1028" width="2" height="8" fill="#ff0000"/><rect x="1028" y="1036" width="2" height="6" fill="#ff0000"/><rect x="1026" y="1042" width="2" height="6" fill="#ff0000"/><rect x="1024" y="1048" width="2" height="6" fill="#ff0000"/><rect x="1022" y="1054" width="2" height="6" fill="#ff0000"/><rect x="1020" y="1060" width="2" height="6" fill="#ff0000"/><rect x="1018" y="1066" width="2" height="6" fill="#ff0000"/><rect x="1016" y="1072" width="2" height="6" fill="#ff0000"/><rect x="1014" y="1078" width="2" height="6" fill="#ff0000"/><rect x="1012" y="1084" width="2" height="6" fill="#ff0000"/><rect x="1010" y="1090" width="2" height="6" fill="#ff0000"/><rect x="1008" y="1096" width="2" height="6" fill="#ff0000"/><rect x="1006" y="1102" width="2" height="8" fill="#ff0000"/><rect x="1004" y="1110" width="2" height="6" fill="#ff0000"/><rect x="1002" y="1116" width="2" height="6" fill="#ff0000"/><rect x="1000" y="1122" width="2" height="6" fill="#ff0000"/><rect x="998" y="1128" width="2" height="6" fill="#ff0000"/><rect x="996" y="1134" width="2" height="6" fill="#ff0000"/><rect x="994" y="1140" width="2" height="6" fill="#ff0000"/><rect x="992" y="1146" width="2" height="6" fill="#ff0000"/><rect x="990" y="1152" width="2" height="6" fill="#ff0000"/><rect x="988" y="1158" width="2" height="6" fill="#ff0000"/><rect x="986" y="1164" width="2" height="6" fill="#ff0000"/><rect x="984" y="1170" width="2" height="8" fill="#ff0000"/><rect x="982" y="1178" width="2" height="6" fill="#ff0000"/><rect x="980" y="1184" width="2" height="6" fill="#ff0000"/><rect x="978" y="1190" width="2" height="2" fill="#ff0000"/><rect x="1036" y="662" width="2" height="2" fill="#00ff00"/><rect x="1038" y="664" width="2" height="2" fill="#00ff00"/><rect x="1040" y="666" width="2" height="2" fill="#00ff00"/><rect x="1042" y="668" width="2" height="2" fill="#00ff00"/><rect x="1044" y="670" width="4" height="2" fill="#00ff00"/><rect x="1048" y="672" width="2" height="2" fill="#00ff00"/><rect x="1050" y="674" width="2" height="2" fill="#00ff00"/><rect x="1052" y="676" width="2" height="2" fill="#00ff00"/><rect x="1054" y="678" width="2" height="2" fill="#00ff00"/><rect x="1056" y="680" width="2" height="2" fill="#00ff00"/><rect x="1058" y="682" width="2" height="2" fill="#00ff00"/><rect x="1060" y="684" width="4" height="2" fill="#00ff00"/><rect x="1064" y="686" width="2" height="2" fill="#00ff00"/><rect x="1066" y="688" width="2" height="2" fill="#00ff00"/><rect x="1068" y="690" width="2" height="2" fill="#00ff00"/><rect x="1070" y="692" width="2" height="2" fill="#00ff00"/><rect x="1072" y="694" width="2" height="2" fill="#00ff00"/><rect x="1074" y="696" width="2" height="2" fill="#00ff00"/><rect x="1076" y="698" width="2" height="2" fill="#00ff00"/><rect x="1078" y="700" width="4" height="2" fill="#00ff00"/><rect x="1082" y="702" width="2" height="2" fill="#00ff00"/><rect x="1084" y="704" width="2" height="2" fill="#00ff00"/><rect x="1086" y="706" width="2" height="2" fill="#00ff00"/><rect x="1088" y="708" width="2" height="2" fill="#00ff00"/><rect x="1090" y="710" width="2" height="2" fill="#00ff00"/><rect x="1092" y="712" width="2" height="2" fill="#00ff00"/><rect x="1094" y="714" width="4" height="2" fill="#00ff00"/><rect x="1098" y="716" width="2" height="2" fill="#00ff00"/><rect x="1100" y="718" width="2" height="2" fill="#00ff00"/><rect x="1102" y="720" width="2" height="2" fill="#00ff00"/><rect x="1104" y="722" width="2" height="2" fill="#00ff00"/><rect x="1042" y="732" width="2" height="2" fill="#ffff00"/><rect x="1044" y="730" width="2" height="2" fill="#ffff00"/><rect x="1046" y="728" width="2" height="2" fill="#ffff00"/><rect x="1048" y="726" width="4" height="2" fill="#ffff00"/><rect x="1052" y="724" width="2" height="2" fill="#ffff00"/><rect x="1054" y="722" width="2" height="2" fill="#ffff00"/><rect x="1056" y="720" width="2" height="2" fill="#ffff00"/><rect x="1058" y="718" width="2" height="2" fill="#ffff00"/><rect x="1060" y="716" width="2" height="2" fill="#ffff00"/><rect x="1062" y="714" width="2" height="2" fill="#ffff00"/><rect x="1064" y="712" width="4" height="2" fill="#ffff00"/><rect x="1068" y="710" width="2" height="2" fill="#ffff00"/><rect x="1070" y="708" width="2" height="2" fill="#ffff00"/><rect x="1072" y="706" width="2" height="2" fill="#ffff00"/><rect x="1074" y="704" width="2" height="2" fill="#ffff00"/><rect x="1076" y="702" width="2" height="2" fill="#ffff00"/><rect x="1078" y="700" width="4" height="2" fill="#ffff00"/><rect x="1082" y="698" width="2" height="2" fill="#ffff00"/><rect x="1084" y="696" width="2" height="2" fill="#ffff00"/><rect x="1086" y="694" width="2" height="2" fill="#ffff00"/><rect x="1088" y="692" width="2" height="2" fill="#ffff00"/><rect x="1090" y="690" width="2" height="2" fill="#ffff00"/><rect x="1092" y="688" width="2" height="2" fill="#ffff00"/><rect x="1094" y="686" width="4" height="2" fill="#ffff00"/><rect x="1098" y="684" width="2" height="2" fill="#ffff00"/><rect x="1100" y="682" width="2" height="2" fill="#ffff00"/><rect x="1102" y="680" width="2" height="2" fill="#ffff00"/><rect x="1090" y="672" width="2" height="4" fill="#ff0000"/><rect x="1088" y="676" width="2" height="4" fill="#ff0000"/><rect x="1086" y="680" width="2" height="6" fill="#ff0000"/><rect x="1084" y="686" width="2" height="4" fill="#ff0000"/><rect x="1082" y="690" width="2" height="6" fill="#ff0000"/><rect x="1080" y="696" width="2" height="6" fill="#ff0000"/><rect x="1078" y="702" width="2" height="4" fill="#ff0000"/><rect x="1076" y="706" width="2" height="6" fill="#ff0000"/><rect x="1074" y="712" width="2" height="4" fill="#ff0000"/><rect x="1072" y="716" width="2" height="6" fill="#ff0000"/><rect x="1070" y="722" width="2" height="4" fill="#ff0000"/><rect x="1068" y="726" width="2" height="4" fill="#ff0000"/></g>
      <polygon points="1100,424 1668,340 1960,693.5 1108,833.4" fill="#000" shape-rendering="crispEdges"/>
      <g clip-path="url(#bandclip)"><g id="bandstrips"><polygon points="1100.0,485.8 1109.5,484.3 1117.9,713.1 1106.0,715.0" fill="#ff7800"/><polygon points="1105.6,484.9 1115.0,483.5 1124.9,712.0 1113.0,713.9" fill="#f97300"/><polygon points="1111.1,484.1 1120.6,482.6 1131.9,710.9 1120.0,712.8" fill="#f46d00"/><polygon points="1116.7,483.2 1126.1,481.8 1138.9,709.8 1127.0,711.7" fill="#ee6800"/><polygon points="1122.2,482.4 1131.7,480.9 1145.9,708.7 1134.0,710.6" fill="#e96300"/><polygon points="1127.8,481.5 1137.3,480.1 1152.9,707.6 1141.0,709.5" fill="#e45e00"/><polygon points="1133.4,480.7 1142.8,479.2 1159.9,706.5 1148.0,708.4" fill="#de5900"/><polygon points="1138.9,479.8 1148.4,478.4 1166.9,705.4 1155.0,707.3" fill="#da5400"/><polygon points="1144.5,479.0 1153.9,477.5 1173.9,704.3 1162.0,706.2" fill="#d54f00"/><polygon points="1150.0,478.1 1159.5,476.7 1180.9,703.2 1169.0,705.1" fill="#d04b00"/><polygon points="1155.6,477.3 1165.1,475.8 1187.9,702.1 1176.0,704.0" fill="#cb4600"/><polygon points="1161.2,476.4 1170.6,475.0 1194.9,701.0 1183.0,702.9" fill="#c74200"/><polygon points="1166.7,475.6 1176.2,474.1 1201.9,699.9 1190.0,701.8" fill="#c33e00"/><polygon points="1172.3,474.7 1181.7,473.3 1208.9,698.8 1197.0,700.7" fill="#be3a00"/><polygon points="1177.9,473.8 1187.3,472.4 1215.9,697.7 1204.0,699.6" fill="#ba3600"/><polygon points="1183.4,473.0 1192.9,471.5 1222.9,696.6 1211.0,698.5" fill="#b63200"/><polygon points="1189.0,472.1 1198.4,470.7 1229.9,695.5 1218.0,697.4" fill="#b22e00"/><polygon points="1194.5,471.3 1204.0,469.8 1236.8,694.4 1225.0,696.3" fill="#af2a00"/><polygon points="1200.1,470.4 1209.5,469.0 1243.8,693.3 1232.0,695.2" fill="#ab2700"/><polygon points="1205.7,469.6 1215.1,468.1 1250.8,692.2 1238.9,694.0" fill="#a72300"/><polygon points="1211.2,468.7 1220.7,467.3 1257.8,691.1 1245.9,692.9" fill="#a42000"/><polygon points="1216.8,467.9 1226.2,466.4 1264.8,690.0 1252.9,691.8" fill="#a11d00"/><polygon points="1222.3,467.0 1231.8,465.6 1271.8,688.9 1259.9,690.7" fill="#9d1a00"/><polygon points="1227.9,466.2 1237.4,464.7 1278.8,687.8 1266.9,689.6" fill="#9a1600"/><polygon points="1233.5,465.3 1242.9,463.9 1285.8,686.7 1273.9,688.5" fill="#971400"/><polygon points="1239.0,464.5 1248.5,463.0 1292.8,685.6 1280.9,687.4" fill="#941100"/><polygon points="1244.6,463.6 1254.0,462.2 1299.8,684.5 1287.9,686.3" fill="#910e00"/><polygon points="1250.1,462.8 1259.6,461.3 1306.8,683.4 1294.9,685.2" fill="#8f0b00"/><polygon points="1255.7,461.9 1265.2,460.4 1313.8,682.2 1301.9,684.1" fill="#8c0900"/><polygon points="1261.3,461.0 1270.7,459.6 1320.8,681.1 1308.9,683.0" fill="#890600"/><polygon points="1266.8,460.2 1276.3,458.7 1327.8,680.0 1315.9,681.9" fill="#870400"/><polygon points="1272.4,459.3 1281.8,457.9 1334.8,678.9 1322.9,680.8" fill="#840100"/><polygon points="1277.9,458.5 1287.4,457.0 1341.8,677.8 1329.9,679.7" fill="#820000"/><polygon points="1283.5,457.6 1293.0,456.2 1348.8,676.7 1336.9,678.6" fill="#800000"/><polygon points="1289.1,456.8 1298.5,455.3 1355.8,675.6 1343.9,677.5" fill="#7d0000"/><polygon points="1294.6,455.9 1304.1,454.5 1362.8,674.5 1350.9,676.4" fill="#7b0000"/><polygon points="1300.2,455.1 1309.6,453.6 1369.8,673.4 1357.9,675.3" fill="#790000"/><polygon points="1305.8,454.2 1315.2,452.8 1376.8,672.3 1364.9,674.2" fill="#770000"/><polygon points="1311.3,453.4 1320.8,451.9 1383.8,671.2 1371.9,673.1" fill="#750000"/><polygon points="1316.9,452.5 1326.3,451.1 1390.8,670.1 1378.9,672.0" fill="#740000"/><polygon points="1322.4,451.7 1331.9,450.2 1397.8,669.0 1385.9,670.9" fill="#720000"/><polygon points="1328.0,450.8 1337.5,449.3 1404.8,667.9 1392.9,669.8" fill="#700000"/><polygon points="1333.6,449.9 1343.0,448.5 1411.8,666.8 1399.9,668.7" fill="#6e0000"/><polygon points="1339.1,449.1 1348.6,447.6 1418.8,665.7 1406.9,667.6" fill="#6d0000"/><polygon points="1344.7,448.2 1354.1,446.8 1425.8,664.6 1413.9,666.5" fill="#6b0000"/><polygon points="1350.2,447.4 1359.7,445.9 1432.8,663.5 1420.9,665.4" fill="#6a0000"/><polygon points="1355.8,446.5 1365.3,445.1 1439.8,662.4 1427.9,664.3" fill="#680000"/><polygon points="1361.4,445.7 1370.8,444.2 1446.8,661.3 1434.9,663.2" fill="#670000"/><polygon points="1366.9,444.8 1376.4,443.4 1453.8,660.2 1441.9,662.1" fill="#660000"/><polygon points="1372.5,444.0 1381.9,442.5 1460.8,659.1 1448.9,661.0" fill="#640000"/><polygon points="1378.0,443.1 1387.5,441.7 1467.8,658.0 1455.9,659.9" fill="#630000"/><polygon points="1383.6,442.3 1393.1,440.8 1474.8,656.9 1462.9,658.8" fill="#620000"/><polygon points="1389.2,441.4 1398.6,440.0 1481.8,655.8 1469.9,657.7" fill="#610000"/><polygon points="1394.7,440.6 1404.2,439.1 1488.8,654.7 1476.9,656.6" fill="#600000"/><polygon points="1400.3,439.7 1409.7,438.3 1495.7,653.6 1483.9,655.5" fill="#5f0000"/><polygon points="1405.8,438.9 1415.3,437.4 1502.7,652.5 1490.8,654.4" fill="#5e0000"/><polygon points="1411.4,438.0 1420.9,436.5 1509.7,651.4 1497.8,653.2" fill="#5d0000"/><polygon points="1417.0,437.1 1426.4,435.7 1516.7,650.3 1504.8,652.1" fill="#5c0000"/><polygon points="1422.5,436.3 1432.0,434.8 1523.7,649.2 1511.8,651.0" fill="#5b0000"/><polygon points="1428.1,435.4 1437.5,434.0 1530.7,648.1 1518.8,649.9" fill="#5a0000"/><polygon points="1433.7,434.6 1443.1,433.1 1537.7,647.0 1525.8,648.8" fill="#5a0000"/><polygon points="1439.2,433.7 1448.7,432.3 1544.7,645.9 1532.8,647.7" fill="#590000"/><polygon points="1444.8,432.9 1454.2,431.4 1551.7,644.8 1539.8,646.6" fill="#580000"/><polygon points="1450.3,432.0 1459.8,430.6 1558.7,643.7 1546.8,645.5" fill="#570000"/><polygon points="1455.9,431.2 1465.4,429.7 1565.7,642.6 1553.8,644.4" fill="#560000"/><polygon points="1461.5,430.3 1470.9,428.9 1572.7,641.4 1560.8,643.3" fill="#560000"/><polygon points="1467.0,429.5 1476.5,428.0 1579.7,640.3 1567.8,642.2" fill="#550000"/><polygon points="1472.6,428.6 1482.0,427.2 1586.7,639.2 1574.8,641.1" fill="#540000"/><polygon points="1478.1,427.8 1487.6,426.3 1593.7,638.1 1581.8,640.0" fill="#540000"/><polygon points="1483.7,426.9 1493.2,425.4 1600.7,637.0 1588.8,638.9" fill="#530000"/><polygon points="1489.3,426.0 1498.7,424.6 1607.7,635.9 1595.8,637.8" fill="#530000"/><polygon points="1494.8,425.2 1504.3,423.7 1614.7,634.8 1602.8,636.7" fill="#520000"/><polygon points="1500.4,424.3 1509.8,422.9 1621.7,633.7 1609.8,635.6" fill="#510000"/><polygon points="1505.9,423.5 1515.4,422.0 1628.7,632.6 1616.8,634.5" fill="#510000"/><polygon points="1511.5,422.6 1521.0,421.2 1635.7,631.5 1623.8,633.4" fill="#500000"/><polygon points="1517.1,421.8 1526.5,420.3 1642.7,630.4 1630.8,632.3" fill="#500000"/><polygon points="1522.6,420.9 1532.1,419.5 1649.7,629.3 1637.8,631.2" fill="#4f0000"/><polygon points="1528.2,420.1 1537.6,418.6 1656.7,628.2 1644.8,630.1" fill="#4e0000"/><polygon points="1533.8,419.2 1543.2,417.8 1663.7,627.1 1651.8,629.0" fill="#4e0000"/><polygon points="1539.3,418.4 1548.8,416.9 1670.7,626.0 1658.8,627.9" fill="#4d0000"/><polygon points="1544.9,417.5 1554.3,416.1 1677.7,624.9 1665.8,626.8" fill="#4d0000"/><polygon points="1550.4,416.7 1559.9,415.2 1684.7,623.8 1672.8,625.7" fill="#4c0000"/><polygon points="1556.0,415.8 1565.4,414.4 1691.7,622.7 1679.8,624.6" fill="#4b0000"/><polygon points="1561.6,414.9 1571.0,413.5 1698.7,621.6 1686.8,623.5" fill="#4b0000"/><polygon points="1567.1,414.1 1576.6,412.6 1705.7,620.5 1693.8,622.4" fill="#4a0000"/><polygon points="1572.7,413.2 1582.1,411.8 1712.7,619.4 1700.8,621.3" fill="#490000"/><polygon points="1578.2,412.4 1587.7,410.9 1719.7,618.3 1707.8,620.2" fill="#490000"/><polygon points="1583.8,411.5 1593.3,410.1 1726.7,617.2 1714.8,619.1" fill="#480000"/><polygon points="1589.4,410.7 1598.8,409.2 1733.7,616.1 1721.8,618.0" fill="#470000"/><polygon points="1594.9,409.8 1604.4,408.4 1740.7,615.0 1728.8,616.9" fill="#460000"/><polygon points="1600.5,409.0 1609.9,407.5 1747.6,613.9 1735.8,615.8" fill="#460000"/><polygon points="1606.0,408.1 1615.5,406.7 1754.6,612.8 1742.8,614.7" fill="#450000"/><polygon points="1611.6,407.3 1621.1,405.8 1761.6,611.7 1749.7,613.5" fill="#440000"/><polygon points="1617.2,406.4 1626.6,405.0 1768.6,610.6 1756.7,612.4" fill="#430000"/><polygon points="1622.7,405.6 1632.2,404.1 1775.6,609.5 1763.7,611.3" fill="#420000"/><polygon points="1628.3,404.7 1637.7,403.3 1782.6,608.4 1770.7,610.2" fill="#410000"/><polygon points="1633.8,403.9 1643.3,402.4 1789.6,607.3 1777.7,609.1" fill="#400000"/><polygon points="1639.4,403.0 1648.9,401.5 1796.6,606.2 1784.7,608.0" fill="#3f0000"/><polygon points="1645.0,402.1 1654.4,400.7 1803.6,605.1 1791.7,606.9" fill="#3e0000"/><polygon points="1650.5,401.3 1660.0,399.8 1810.6,604.0 1798.7,605.8" fill="#3d0000"/><polygon points="1656.1,400.4 1665.5,399.0 1817.6,602.9 1805.7,604.7" fill="#3c0000"/><polygon points="1661.7,399.6 1671.1,398.1 1824.6,601.7 1812.7,603.6" fill="#3b0000"/><polygon points="1667.2,398.7 1676.7,397.3 1831.6,600.6 1819.7,602.5" fill="#3a0000"/><polygon points="1672.8,397.9 1682.2,396.4 1838.6,599.5 1826.7,601.4" fill="#380000"/><polygon points="1678.3,397.0 1687.8,395.6 1845.6,598.4 1833.7,600.3" fill="#370000"/><polygon points="1683.9,396.2 1693.3,394.7 1852.6,597.3 1840.7,599.2" fill="#360000"/><polygon points="1689.5,395.3 1698.9,393.9 1859.6,596.2 1847.7,598.1" fill="#340000"/><polygon points="1695.0,394.5 1704.5,393.0 1866.6,595.1 1854.7,597.0" fill="#330000"/><polygon points="1700.6,393.6 1710.0,392.2 1873.6,594.0 1861.7,595.9" fill="#310000"/><polygon points="1706.1,392.8 1711.7,391.9 1875.7,593.7 1868.7,594.8" fill="#300000"/></g><rect x="1100" y="390" width="780" height="330" filter="url(#noise)" opacity="0.12"/></g>
      <line x1="1652" y1="404" x2="1772" y2="600" stroke="#701000" stroke-width="1" opacity="0.35"/>
      
      <ellipse cx="1335" cy="514" rx="75" ry="26" transform="rotate(-6 1335 514)" fill="url(#glow2)"/>
      <circle cx="1292" cy="519" r="22" fill="url(#glow1)"/><ellipse cx="1248" cy="523" rx="45.5" ry="15.5" transform="rotate(-9 1248 523)" fill="#f08a20"/>
      <ellipse cx="1206" cy="528" rx="10" ry="16" fill="url(#glow3)"/>
      <ellipse cx="1248" cy="523" rx="42" ry="18" transform="rotate(-9 1248 523)" fill="#4e0200"/>
    </svg>
  </div>

  <div class="a" style="left:2005px;top:621px;width:12px;height:12px;border-radius:50%;background:radial-gradient(circle at 50% 40%,#d2d2d2,#bcbcbc);box-shadow:0 0 0 0.5px #b0b0b0"></div>
  <!-- dialog -->
  <div id="dlg" class="a" style="left:182px;top:558px;width:730px;height:302px;background:#ececec;border-radius:9px;box-shadow:0 0 0 1px rgba(0,0,0,0.16),0 20px 45px 4px rgba(0,0,0,0.4),0 40px 110px 10px rgba(0,0,0,0.3);overflow:hidden">
    <div class="a" style="left:0;top:0;width:730px;height:43px;background:linear-gradient(#e8e6e8,#d2d0d2);border-bottom:1px solid #b3b1b3"></div>
    <div class="tl" style="left:16px;background:#fc615d;border-color:#df4b46"></div>
    <div class="tl" style="left:56px;background:#fdbc40;border-color:#dfa235"></div>
    <div class="tl" style="left:96px;background:#34c84a;border-color:#28a936"></div>
    <div class="t" style="left:275px;top:9px;font-size:26px;color:#3c3c3c;letter-spacing:0.35px">IGSIO Settings</div>
    <div class="t" style="left:40px;top:100px;letter-spacing:0.43px">Configuration file:</div>
    <div class="a" style="left:550px;top:93px;width:126px;height:39px;background:#fff;border-radius:8px;box-shadow:0 0 0 1px rgba(0,0,0,0.13),0 1px 1px 0.5px rgba(0,0,0,0.2)"></div>
    <div class="t" style="left:579px;top:100px">Apply</div>
    <div class="a" style="left:40px;top:177px;width:649px;height:39px;background:#fff;border-radius:8px;box-shadow:0 0 0 1px rgba(0,0,0,0.13),0 1px 1px 0.5px rgba(0,0,0,0.2);overflow:hidden">
      <div class="a" style="right:0;top:0;width:33px;height:39px;background:linear-gradient(#6cb0f8,#1a7ffc)"></div>
      <svg class="a" style="right:8px;top:7px" width="17" height="26" viewBox="0 0 17 26"><path d="M2 9 L8.5 2.5 L15 9 M2 16 L8.5 22.5 L15 16" fill="none" stroke="#fff" stroke-width="2.6"/></svg>
    </div>
    <div class="t" style="left:55px;top:183px;letter-spacing:0.1px">USSimulatorConfig.xml</div>
    <div class="a" style="left:40px;top:236px;width:28px;height:28px;border-radius:5px;background:linear-gradient(#4ea0f8,#3a90f6);box-shadow:0 0 0 0.5px rgba(0,0,0,0.1)">
      <svg width="28" height="28" viewBox="0 0 28 28"><path d="M7.5 14.5 L12 20 L21 7.5" fill="none" stroke="#fff" stroke-width="2.8" stroke-linecap="round" stroke-linejoin="round"/></svg>
    </div>
    <div class="t" style="left:77px;top:238px;letter-spacing:0.33px">Automatically start last config</div>
  </div>
</div>
  <div class="a" style="left:2028px;top:161px;width:2px;height:2px;background:#000"></div>
  <div class="a" style="left:2028px;top:136px;width:2px;height:1px;background:#888"></div>
</body></html>
